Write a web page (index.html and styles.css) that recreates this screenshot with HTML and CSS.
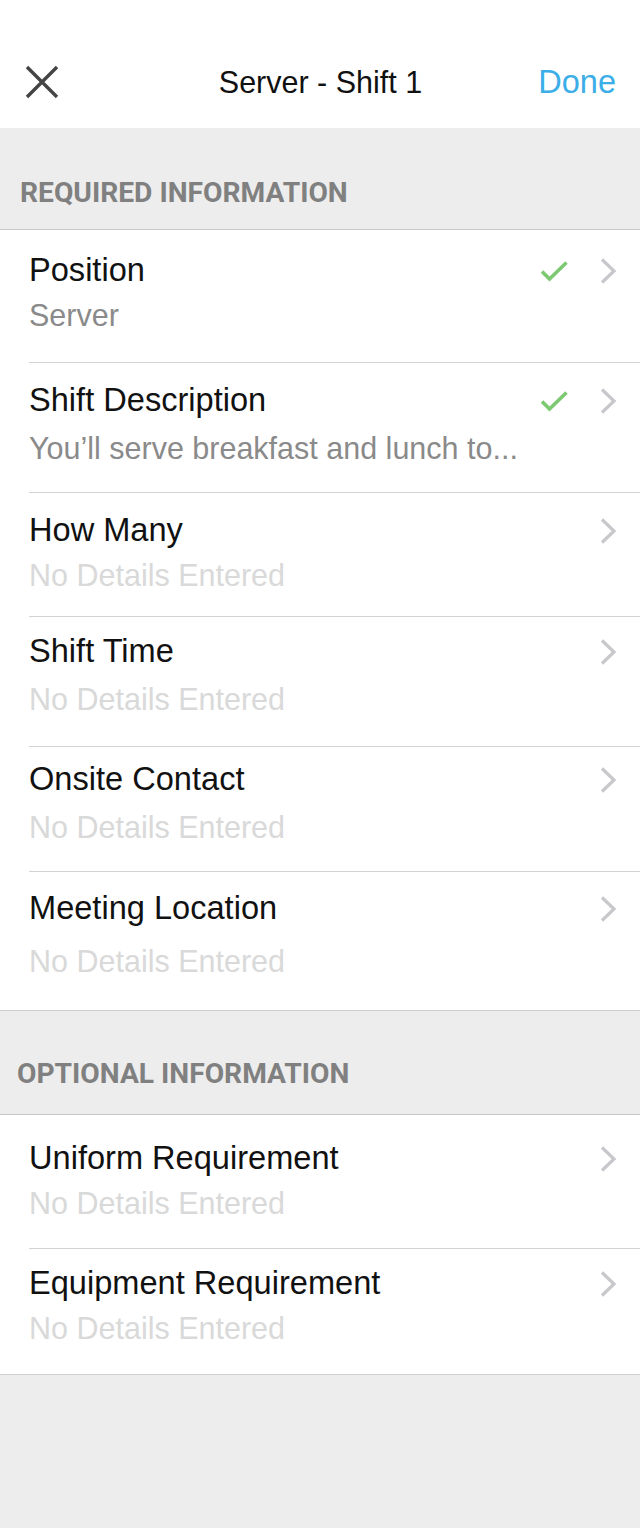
FILE: index.html
```html
<!DOCTYPE html>
<html>
<head>
<meta charset="utf-8">
<link rel="stylesheet" href="styles.css">
</head>
<body>
<div class="screen">
  <header class="navbar">
    <div class="nav-left">
      <button class="nav-close" aria-label="Close">
        <svg width="34" height="34" viewBox="0 0 34 34"><path d="M2 2 L32 32 M32 2 L2 32" stroke="#444" stroke-width="3.4" fill="none"/></svg>
      </button>
    </div>
    <h1 class="nav-title">Server - Shift 1</h1>
    <div class="nav-right"><button class="nav-done">Done</button></div>
  </header>

  <div class="section-head section-head--required">REQUIRED INFORMATION</div>
  <ul class="group group--required">
    <li class="row">
      <div class="row-text"><div class="row-title">Position</div><div class="row-sub row-sub--filled">Server</div></div>
      <div class="row-icons"><svg class="check" width="28" height="22" viewBox="0 0 28 22"><path d="M2 10.5 L9.5 18 L26.5 1.5" stroke="#7dc972" stroke-width="3.6" fill="none"/></svg><svg class="chev" width="18" height="26" viewBox="0 0 18 26"><path d="M3 1.5 L15 13 L3 24.5" stroke="#c7c7cc" stroke-width="3.2" fill="none"/></svg></div>
    </li>
    <li class="row">
      <div class="row-text"><div class="row-title">Shift Description</div><div class="row-sub row-sub--filled">You’ll serve breakfast and lunch to...</div></div>
      <div class="row-icons"><svg class="check" width="28" height="22" viewBox="0 0 28 22"><path d="M2 10.5 L9.5 18 L26.5 1.5" stroke="#7dc972" stroke-width="3.6" fill="none"/></svg><svg class="chev" width="18" height="26" viewBox="0 0 18 26"><path d="M3 1.5 L15 13 L3 24.5" stroke="#c7c7cc" stroke-width="3.2" fill="none"/></svg></div>
    </li>
    <li class="row">
      <div class="row-text"><div class="row-title">How Many</div><div class="row-sub">No Details Entered</div></div>
      <div class="row-icons"><svg class="chev" width="18" height="26" viewBox="0 0 18 26"><path d="M3 1.5 L15 13 L3 24.5" stroke="#c7c7cc" stroke-width="3.2" fill="none"/></svg></div>
    </li>
    <li class="row">
      <div class="row-text"><div class="row-title">Shift Time</div><div class="row-sub">No Details Entered</div></div>
      <div class="row-icons"><svg class="chev" width="18" height="26" viewBox="0 0 18 26"><path d="M3 1.5 L15 13 L3 24.5" stroke="#c7c7cc" stroke-width="3.2" fill="none"/></svg></div>
    </li>
    <li class="row">
      <div class="row-text"><div class="row-title">Onsite Contact</div><div class="row-sub">No Details Entered</div></div>
      <div class="row-icons"><svg class="chev" width="18" height="26" viewBox="0 0 18 26"><path d="M3 1.5 L15 13 L3 24.5" stroke="#c7c7cc" stroke-width="3.2" fill="none"/></svg></div>
    </li>
    <li class="row">
      <div class="row-text"><div class="row-title">Meeting Location</div><div class="row-sub">No Details Entered</div></div>
      <div class="row-icons"><svg class="chev" width="18" height="26" viewBox="0 0 18 26"><path d="M3 1.5 L15 13 L3 24.5" stroke="#c7c7cc" stroke-width="3.2" fill="none"/></svg></div>
    </li>
  </ul>

  <div class="section-head section-head--optional">OPTIONAL INFORMATION</div>
  <ul class="group group--optional">
    <li class="row">
      <div class="row-text"><div class="row-title">Uniform Requirement</div><div class="row-sub">No Details Entered</div></div>
      <div class="row-icons"><svg class="chev" width="18" height="26" viewBox="0 0 18 26"><path d="M3 1.5 L15 13 L3 24.5" stroke="#c7c7cc" stroke-width="3.2" fill="none"/></svg></div>
    </li>
    <li class="row">
      <div class="row-text"><div class="row-title">Equipment Requirement</div><div class="row-sub">No Details Entered</div></div>
      <div class="row-icons"><svg class="chev" width="18" height="26" viewBox="0 0 18 26"><path d="M3 1.5 L15 13 L3 24.5" stroke="#c7c7cc" stroke-width="3.2" fill="none"/></svg></div>
    </li>
  </ul>
  <div class="footer-fill"></div>
</div>
</body>
</html>
```

FILE: styles.css
```css
* { box-sizing: border-box; }
html, body { margin: 0; padding: 0; }
body {
  width: 640px;
  height: 1528px;
  background: #ededed;
  font-family: "Liberation Sans", Arial, sans-serif;
  color: #111;
  overflow: hidden;
}
.screen { display: flex; flex-direction: column; min-height: 1528px; }

.navbar {
  height: 128px;
  background: #fff;
  display: grid;
  grid-template-columns: 1fr auto 1fr;
  align-items: center;
  padding: 36px 24px 0 25px;
}
.nav-left { display: flex; }
.nav-right { display: flex; justify-content: flex-end; }
.nav-close {
  border: 0; background: none; padding: 0; margin: 0;
  width: 34px; height: 34px; display: flex;
}
.nav-title {
  margin: 0;
  text-align: center;
  font-size: 30.5px;
  line-height: 36px;
  font-weight: 400;
  color: #111;
}
.nav-done {
  border: 0; background: none; padding: 0; margin: 0;
  font-family: "Liberation Sans", Arial, sans-serif;
  font-size: 32.5px;
  line-height: 36px;
  color: #3baee8;
}

.section-head {
  background: #ededed;
  color: #808080;
  font-family: Roboto, "Liberation Sans", sans-serif;
  font-weight: 700;
  font-size: 28.2px;
  line-height: 30px;
  border-bottom: 1px solid #c9c9c9;
  display: flex;
  align-items: flex-end;
}
.section-head--required { height: 102px; padding: 0 0 21px 20px; }
.section-head--optional { height: 104px; padding: 0 0 25px 17px; }

.group {
  list-style: none;
  margin: 0;
  padding: 0 0 0 29px;
  background: #fff;
  border-bottom: 1px solid #cfcfcf;
}
.row {
  display: flex;
  align-items: flex-start;
  border-bottom: 1px solid #d2d2d2;
  padding-right: 23px;
}
.row:last-child { border-bottom: 0; }

.row-text { flex: 1; min-width: 0; }
.row-title { font-size: 32.6px; line-height: 40px; color: #111; }
.row-sub { font-size: 30.5px; line-height: 50px; color: #d9d9d9; white-space: nowrap; }
.row-sub--filled { color: #8a8a8a; }

.row-icons {
  display: flex;
  align-items: center;
  gap: 31px;
  height: 40px;
}
.check { display: block; margin-top: 4px; }
.chev { display: block; margin-top: 2px; }

.group--required .row:nth-child(1) { height: 133px; padding-top: 20px; }
.group--required .row:nth-child(2) { height: 130px; padding-top: 17px; }
.group--required .row:nth-child(3) { height: 124px; padding-top: 17px; }
.group--required .row:nth-child(4) { height: 130px; padding-top: 14px; }
.group--required .row:nth-child(5) { height: 125px; padding-top: 12px; }
.group--required .row:nth-child(6) { height: 138px; padding-top: 16px; }
.group--optional .row:nth-child(1) { height: 134px; padding-top: 23px; }
.group--optional .row:nth-child(2) { height: 125px; padding-top: 14px; }

.group--required .row:nth-child(2) .row-sub { margin-top: 3px; }
.group--required .row:nth-child(4) .row-sub { margin-top: 3px; }
.group--required .row:nth-child(5) .row-sub { margin-top: 3px; }
.group--required .row:nth-child(6) .row-sub { margin-top: 8px; }

.footer-fill { flex: 1; background: #ededed; }
```
